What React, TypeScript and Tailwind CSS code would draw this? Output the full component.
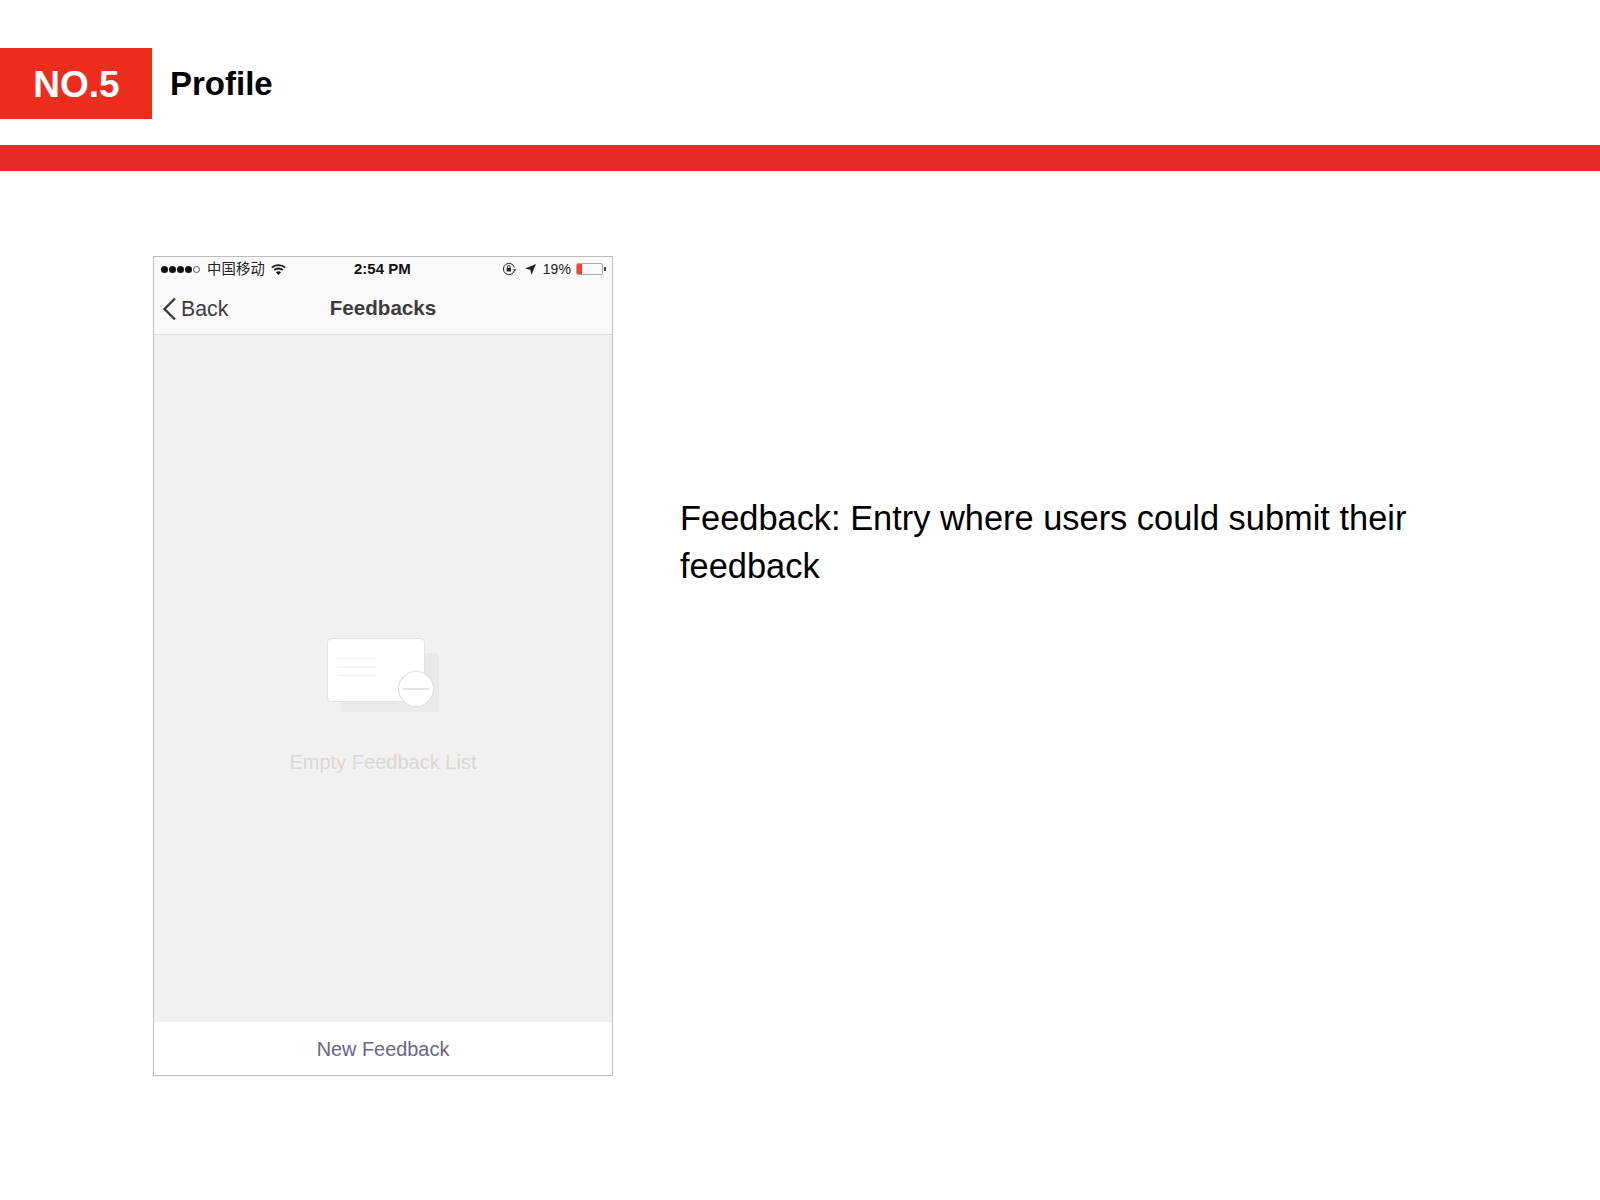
import React from 'react';

const font = { fontFamily: '"Liberation Sans", "Noto Sans CJK SC", Arial, sans-serif' };

function Wifi() {
  return (
    <svg width="15" height="11" viewBox="0 0 15 11" fill="none" stroke="#111" strokeWidth="1.8">
      <path d="M0.8 3.6C4.6 0.2 10.4 0.2 14.2 3.6" />
      <path d="M3.2 6.2C5.6 3.9 9.4 3.9 11.8 6.2" />
      <path d="M7.5 11L4.9 8.3C6.4 7 8.6 7 10.1 8.3Z" fill="#111" stroke="none" />
    </svg>
  );
}

function StatusBar() {
  return (
    <div className="h-[24px] flex items-center relative text-[#222]">
      <div className="flex items-center ml-[7px] gap-[1px]">
        {[0, 1, 2, 3].map((i) => (
          <span key={i} className="w-[7px] h-[7px] rounded-full bg-[#111]" />
        ))}
        <span className="w-[7px] h-[7px] rounded-full border border-[#555]" />
      </div>
      <span className="ml-[7px] pt-[1px] text-[14.3px] tracking-[0.2px]">中国移动</span>
      <span className="ml-[6px] flex"><Wifi /></span>
      <span className="absolute left-[200px] top-[3px] text-[15px] font-bold leading-[18px] text-[#111]">2:54 PM</span>
      <div className="ml-auto flex items-center mr-[6px]">
        <svg width="15" height="14" viewBox="0 0 15 14" fill="none" stroke="#222" strokeWidth="1">
          <path d="M12.4 8.6A5.6 5.6 0 1 1 12.4 5.4" />
          <path d="M11 7.2h3.4l-1.7 2z" fill="#222" stroke="none" />
          <rect x="4.6" y="6" width="4.4" height="3.4" fill="#222" stroke="none" />
          <path d="M5.5 6V4.8a1.3 1.3 0 0 1 2.6 0V6" />
        </svg>
        <svg className="ml-[8px]" width="11" height="11" viewBox="0 0 11 11">
          <path d="M11 0L6.4 11L5.3 5.7L0 4.6Z" fill="#222" />
        </svg>
        <span className="ml-[7px] text-[14px] tracking-[0.1px]">19%</span>
        <div className="ml-[5px] w-[27px] h-[12px] rounded-[2px] border border-[#aaa] flex overflow-hidden">
          <span className="w-[5px] bg-[#ff3b30]" />
        </div>
        <span className="ml-[1px] w-[2px] h-[4px] bg-[#444]" />
      </div>
    </div>
  );
}

function EmptyIcon() {
  return (
    <svg className="ml-[1px]" width="114" height="76" viewBox="0 0 114 76" fill="none">
      <rect x="14" y="15" width="98" height="59" rx="4" fill="#e9e9e9" />
      <rect x="0.5" y="0.5" width="97" height="63" rx="4" fill="#fff" stroke="#e2e2e2" />
      <path d="M10 20.5H49M10 29H49M10 37.5H49" stroke="#f1f1f1" strokeWidth="1.6" />
      <circle cx="89" cy="51" r="17.5" fill="#fff" stroke="#dedede" strokeWidth="1.2" />
      <path d="M76 51H102" stroke="#dcdcdc" strokeWidth="1.6" />
    </svg>
  );
}

function Phone() {
  return (
    <div className="w-[460px] h-[820px] border border-[#bdbdbd] flex flex-col shrink-0">
      <div className="h-[78px] bg-[#f9f9f9] border-b border-[#dedede] shrink-0 relative">
        <StatusBar />
        <div className="h-[55px] flex items-center relative text-[#3c3c3c]">
          <svg className="ml-[8px]" width="15" height="24" viewBox="0 0 15 24" fill="none" stroke="#3c3c3c" strokeWidth="2.4">
            <path d="M13 1.5L2.5 12L13 22.5" />
          </svg>
          <span className="ml-[4px] pt-[2px] text-[21.3px]">Back</span>
          <span className="absolute inset-x-0 text-center text-[20.6px] font-bold">Feedbacks</span>
        </div>
      </div>
      <div className="flex-1 bg-[#f1f1f1] flex flex-col items-center pt-[303px]">
        <EmptyIcon />
        <p className="mt-[36px] text-[20px] leading-[24px] tracking-[0.02px] text-[#dcd6cf]">Empty Feedback List</p>
      </div>
      <div className="h-[53px] shrink-0 bg-white flex items-center justify-center text-[19.9px] leading-[24px] text-[#67668a]">
        New Feedback
      </div>
    </div>
  );
}

export default function App() {
  return (
    <div className="w-[1600px] h-[1200px] bg-white overflow-hidden" style={font}>
      <div className="pt-[48px] flex items-center">
        <div className="w-[152px] h-[71px] pt-[2px] pl-[1px] bg-[#ee2d1e] flex items-center justify-center text-white text-[37px] font-bold">
          NO.5
        </div>
        <h1 className="ml-[18px] pt-[1px] text-[33px] font-bold text-black">Profile</h1>
      </div>
      <div className="mt-[26px] h-[26px] bg-[#e62a28]" />
      <div className="mt-[85px] ml-[153px] flex">
        <Phone />
        <p className="ml-[67px] mt-[238px] w-[790px] text-[34.4px] leading-[48px] text-black">
          Feedback: Entry where users could submit their feedback
        </p>
      </div>
    </div>
  );
}
